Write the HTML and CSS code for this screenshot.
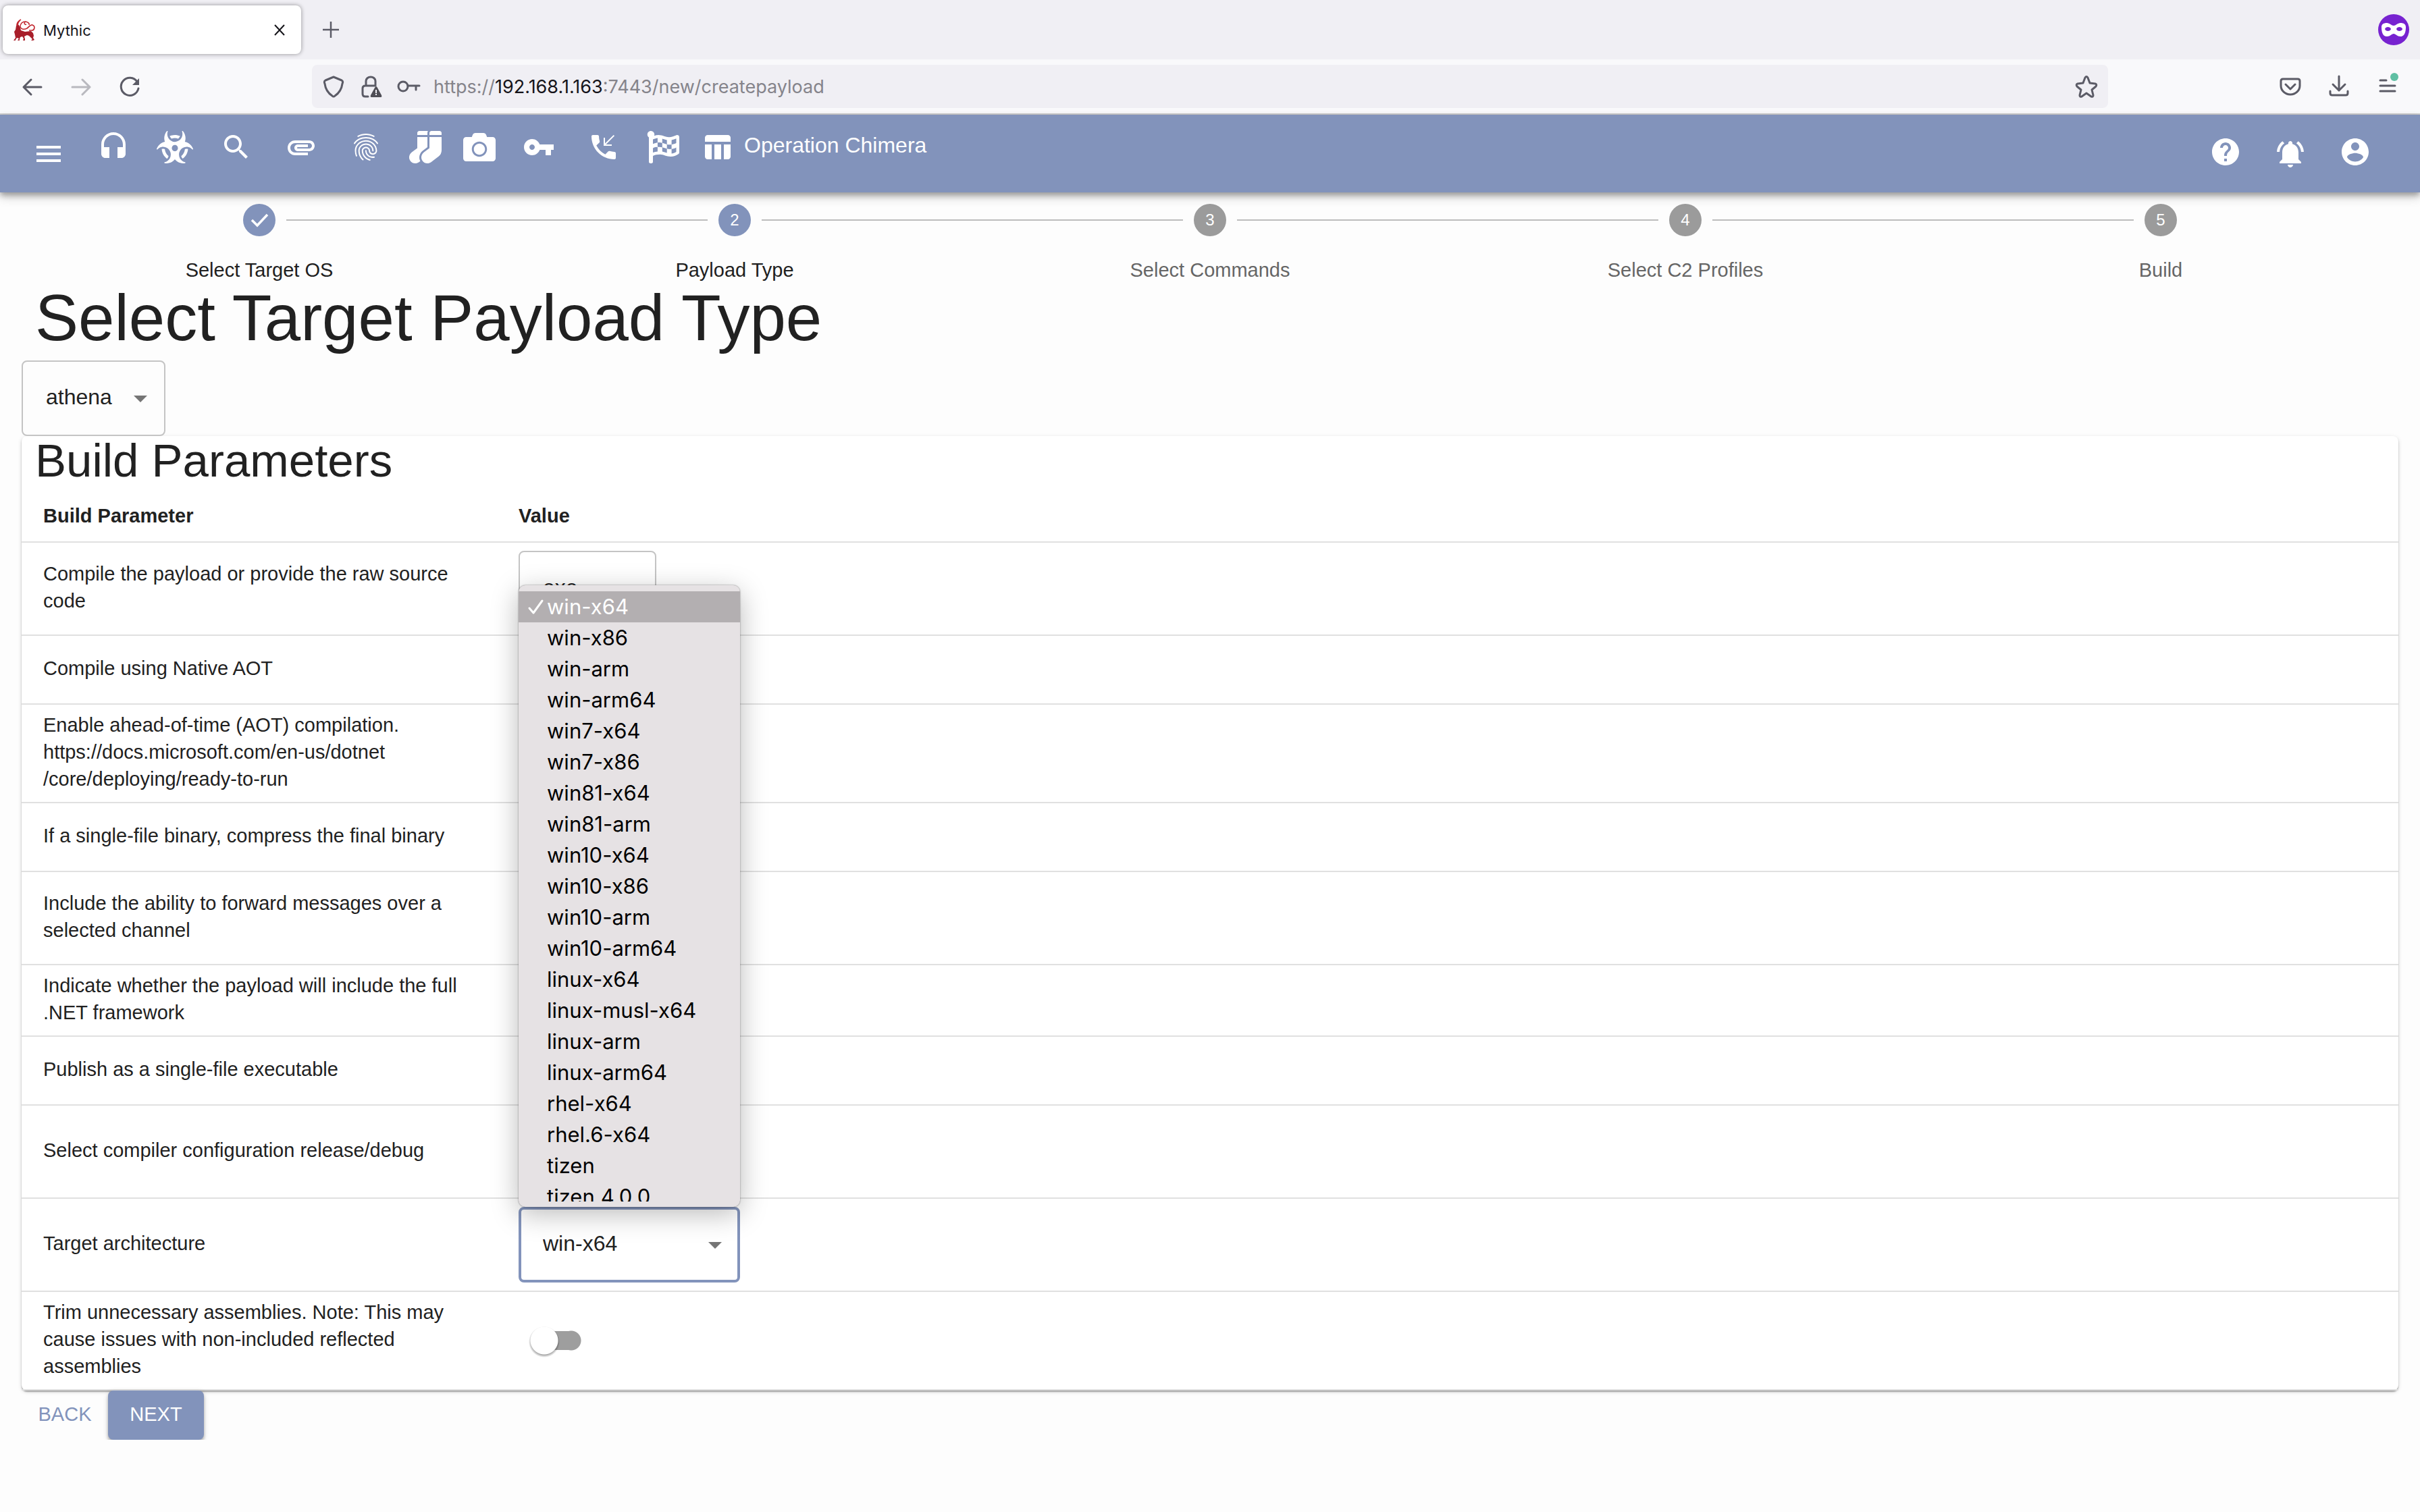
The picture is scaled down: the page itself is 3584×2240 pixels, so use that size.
FILE: index.html
```html
<!DOCTYPE html>
<html lang="en">
<head>
<meta charset="utf-8">
<title>Mythic</title>
<link rel="stylesheet" href="styles.css">
</head>
<body>
<div class="tabstrip">
  <div class="tab">
    <svg class="tab-logo" viewBox="0 0 32 32" aria-hidden="true"><g fill="none" stroke="#c2272f" stroke-width="1.600"><path d="M11 1C7 3 4 6 5 12M9 3C6 6 6 9 7 11" /><path d="M19 8c-2 1-4-1-2-3M10 12c0-5 3-8 8-8 4 1 6 3 5 5M10 12c2 4 6 4 10 2 4-3 5-6 8-5 5 2 3 8-1 8h-4"/></g><path fill="#a81e2a" d="M4 10l4-1 2 4 1 4 6 2 9-1 3 3 1 4-1 3 2 3-2 1h-3l2-2-5-5-3-1-4 2 1 4v2h-3l1-3-2-3-3 1-1 3v2H6l2-3-3-1-2 3v1H0l3-4-1-5-1-4 2-3z"/></svg>
    <span class="tab-title">Mythic</span>
    <button class="bare" aria-label="Close tab"><svg class="i20" viewBox="0 0 20 20"><path d="M3 3l14 15M17 3L3 18" fill="none" stroke="#15141a" stroke-width="2"/></svg></button>
  </div>
  <button class="bare newtab" aria-label="New tab"><svg class="i24" viewBox="0 0 24 24"><path d="M12 0v24M0 12h24" fill="none" stroke="#5b5b66" stroke-width="2.500"/></svg></button>
  <svg class="mask" viewBox="0 0 46 46" aria-label="Private browsing"><circle cx="23" cy="23" r="23" fill="#7722d0"/><path fill="#fff" fill-rule="evenodd" d="M5 19c0-4 3-6 8-6 4 0 7 4 10 4s6-4 10-4c5 0 8 2 8 6 0 8-2 14-8 14-5 0-7-4-10-4s-5 4-10 4C7 33 5 27 5 19zM10 22c1 4 8 4 9 0-1-4-8-4-9 0zM27 22c1 4 8 4 9 0-1-4-8-4-9 0z"/></svg>
</div>
<div class="toolbar">
  <div class="nav">
    <button class="bare" aria-label="Back"><svg class="i32" viewBox="0 0 32 32"><path d="M29 17H3M14 6L3 17l11 11" class="st"/></svg></button>
    <button class="bare dim" aria-label="Forward"><svg class="i32" viewBox="0 0 32 32"><path d="M3 17h26M18 6l11 11-11 11" class="st"/></svg></button>
    <button class="bare" aria-label="Reload"><svg class="i32" viewBox="0 0 32 32"><path d="M27 9A13 13 0 1 0 29 19" class="st"/><path fill="#5b5b66" d="M30 4v10H20z"/></svg></button>
  </div>
  <div class="urlbar">
    <svg class="i32" viewBox="0 0 32 32"><path d="M16 2l12 5c2 1 2 3 1 5-1 8-5 14-11 18q-2 2-4 0C8 26 4 20 3 12c-1-2-1-4 1-5z" class="st"/></svg>
    <svg class="i32" viewBox="0 0 32 32"><path d="M8 15V8a7 6 0 0 1 14 0v7M11 31H7q-4 0-4-4V19q0-4 4-4h15" class="st"/><path fill="#4f4e56" fill-rule="evenodd" d="M23 16q1 0 2 2l6 11q1 3-1 3H16q-2 0-1-3l6-11q1-2 2-2zM22 21v5h2v-5zm0 6v2h2v-2z"/></svg>
    <svg class="i32 key" viewBox="0 0 32 32"><circle cx="7" cy="16" r="7" class="st"/><path d="M14 15h17M26 15v6" class="st"/></svg>
    <div class="url">https://<b>192.168.1.163</b>:7443/new/createpayload</div>
    <svg class="i32" viewBox="0 0 32 32"><path d="M14 3q2-3 4 0l3 8 8 1q3 1 1 4l-6 5 2 8q0 3-3 2l-7-5-7 5q-3 1-3-2l2-8-6-5q-2-3 1-4l8-1z" class="st"/></svg>
  </div>
  <div class="tools">
    <svg class="i32" viewBox="0 0 32 32"><path d="M5 5h22q3 0 3 3v7a14 13 0 0 1-28 0V8q0-3 3-3zM9 13l7 7 7-7" class="st"/></svg>
    <svg class="i32" viewBox="0 0 32 32"><path d="M16 1v21M7 13l9 9 9-9M3 23v3q0 3 3 3h20q3 0 3-3v-3" class="st"/></svg>
    <svg class="i32" viewBox="0 0 32 32"><path d="M5 7h9M5 15h22M5 23h22" class="st"/><circle cx="26" cy="2" r="6" fill="#5fbfa3"/></svg>
  </div>
</div>
<header class="appbar">
  <button class="bare menu-btn" aria-label="Open menu"><svg class="i48" viewBox="0 0 24 24"><path d="M3 18h18v-2H3v2zm0-5h18v-2H3v2zm0-7v2h18V6H3z"/></svg></button>
  <nav class="links">
    <a href="#" aria-label="Callbacks"><svg class="i48" viewBox="0 0 24 24"><path d="M12 1c-4.970 0-9 4.030-9 9v7c0 1.660 1.340 3 3 3h3v-8H5v-2c0-3.870 3.130-7 7-7s7 3.130 7 7v2h-4v8h3c1.660 0 3-1.340 3-3v-7c0-4.970-4.030-9-9-9z"/></svg></a>
    <a href="#" class="tight" aria-label="Payloads"><svg class="i54" viewBox="0 0 576 512"><path d="M287.900 112c18.600 0 36.200 3.800 52.800 9.600 13.300-10.300 23.600-24.300 29.500-40.700-25.200-10.900-53-17-82.200-17-29.100 0-56.900 6-82.100 16.900 5.900 16.400 16.200 30.400 29.500 40.700 16.500-5.700 34-9.500 52.500-9.500zM163.600 438.700c12-11.800 20.400-26.400 24.500-42.400-32.900-26.400-54.800-65.300-58.900-109.600-8.500-2.800-17.200-4.600-26.400-4.600-7.600 0-15.200 1-22.500 3.100 4.100 62.800 35.800 118 83.300 153.500zm224.200-42.600c4.100 16 12.500 30.700 24.500 42.500 47.400-35.500 79.100-90.700 83-153.500-7.200-2-14.700-3-22.200-3-9.200 0-18 1.900-26.600 4.700-4.100 44.200-26 82.900-58.700 109.300zm113.500-205c-17.600-10.400-36.300-16.600-55.300-19.900 6-17.700 10-36.400 10-56.200 0-41-14.500-80.800-41-112.200-2.500-3-6.600-3.700-10-1.800-3.300 1.900-4.800 6-3.600 9.800 4.500 13.800 6.600 26.300 6.600 38.500 0 67.800-53.800 122.900-120 122.900S168 117 168 49.200c0-12.100 2.200-24.700 6.600-38.500 1.200-3.700-.3-7.800-3.600-9.800-3.400-1.900-7.500-1.200-10 1.800C134.600 34.200 120 74 120 115c0 19.800 3.900 38.500 10 56.200-18.900 3.300-37.700 9.500-55.300 19.900-34.600 20.500-61 53.300-74.300 92.400-1.300 3.700.2 7.700 3.500 9.800 3.300 2 7.500 1.300 10-1.600 9.400-10.800 19-19.100 29.200-25.100 57.300-33.900 130.800-13.700 163.900 45 33.100 58.700 13.400 134-43.900 167.900-10.200 6.100-22 10.400-35.800 13.400-3.700.8-6.400 4.200-6.400 8.100.1 4 2.700 7.300 6.500 8 39.700 7.800 80.600.8 115.200-19.700 18-10.600 32.900-24.500 45.300-40.100 12.400 15.600 27.300 29.500 45.300 40.100 34.600 20.500 75.500 27.500 115.200 19.700 3.800-.7 6.400-4 6.500-8 0-3.900-2.600-7.300-6.400-8.100-13.900-2.900-25.600-7.300-35.800-13.400-57.300-33.900-77-109.200-43.900-167.900s106.600-78.900 163.900-45c10.200 6.100 19.800 14.300 29.200 25.100 2.500 2.900 6.700 3.600 10 1.600s4.800-6.100 3.500-9.800c-13.100-39.100-39.500-72-74.100-92.400zm-213.400 129c-26.500 0-48-22-48-49.100s21.500-49.100 48-49.100 48 22 48 49.100-21.500 49.100-48 49.100z"/></svg></a>
    <a href="#" aria-label="Search"><svg class="i48" viewBox="0 0 24 24"><path d="M15.500 14h-.79l-.28-.27C15.410 12.590 16 11.110 16 9.500 16 5.910 13.090 3 9.500 3S3 5.910 3 9.500 5.910 16 9.500 16c1.610 0 3.090-.59 4.230-1.570l.27.28v.79l5 4.990L20.490 19l-4.990-5zm-6 0C7.010 14 5 11.990 5 9.500S7.010 5 9.500 5 14 7.010 14 9.500 11.990 14 9.500 14z"/></svg></a>
    <a href="#" aria-label="Files"><svg class="i48" viewBox="0 0 24 24"><path d="M2 12.500C2 9.460 4.460 7 7.500 7H18c2.210 0 4 1.790 4 4s-1.790 4-4 4H9.500C8.120 15 7 13.880 7 12.500S8.120 10 9.500 10H17v2H9.410c-.55 0-.55 1 0 1H18c1.100 0 2-.9 2-2s-.9-2-2-2H7.500C5.570 9 4 10.570 4 12.500S5.570 16 7.500 16H17v2H7.500C4.460 18 2 15.540 2 12.500z"/></svg></a>
    <a href="#" aria-label="Credentials"><svg class="i48" viewBox="0 0 24 24"><path d="M17.810 4.470c-.08 0-.16-.02-.23-.06C15.660 3.420 14 3 12.010 3c-1.980 0-3.860.47-5.570 1.410-.24.13-.54.04-.68-.2-.13-.24-.04-.55.2-.68C7.820 2.520 9.860 2 12.010 2c2.130 0 3.990.47 6.030 1.520.25.13.34.43.21.67-.09.18-.26.28-.44.28zM3.500 9.720c-.1 0-.2-.03-.29-.09-.23-.16-.28-.47-.12-.7.99-1.400 2.250-2.500 3.750-3.270C9.980 4.040 14 4.030 17.150 5.650c1.500.77 2.760 1.860 3.750 3.250.16.22.11.54-.12.7-.23.16-.54.11-.7-.12-.9-1.260-2.040-2.250-3.390-2.940-2.870-1.470-6.540-1.470-9.400.01-1.360.7-2.500 1.700-3.400 2.960-.08.14-.23.21-.39.21zm6.250 12.070c-.13 0-.26-.05-.35-.15-.87-.87-1.340-1.430-2.010-2.640-.69-1.230-1.050-2.730-1.050-4.340 0-2.970 2.540-5.390 5.660-5.390s5.660 2.420 5.660 5.390c0 .28-.22.5-.5.5s-.5-.22-.5-.5c0-2.420-2.090-4.390-4.660-4.390-2.570 0-4.660 1.970-4.660 4.390 0 1.440.32 2.770.93 3.850.64 1.150 1.080 1.640 1.850 2.420.19.2.19.51 0 .71-.11.1-.24.15-.37.15zm7.170-1.850c-1.190 0-2.240-.3-3.100-.89-1.490-1.010-2.380-2.650-2.380-4.390 0-.28.22-.5.5-.5s.5.22.5.5c0 1.410.72 2.740 1.940 3.560.71.48 1.540.71 2.540.71.24 0 .64-.03 1.040-.1.27-.05.53.13.58.41.05.27-.13.53-.41.58-.57.11-1.070.12-1.210.12zM14.910 22c-.04 0-.09-.01-.13-.02-1.590-.44-2.630-1.030-3.720-2.100-1.400-1.390-2.170-3.240-2.170-5.220 0-1.620 1.380-2.940 3.080-2.940 1.700 0 3.080 1.320 3.080 2.940 0 1.070.93 1.940 2.080 1.940s2.080-.87 2.080-1.940c0-3.770-3.250-6.830-7.250-6.830-2.840 0-5.440 1.580-6.610 4.030-.39.81-.59 1.760-.59 2.800 0 .78.07 2.010.67 3.610.1.26-.03.55-.29.64-.26.1-.55-.04-.64-.29-.49-1.310-.73-2.610-.73-3.960 0-1.200.23-2.290.68-3.240 1.330-2.790 4.280-4.600 7.510-4.600 4.550 0 8.250 3.510 8.250 7.830 0 1.620-1.380 2.940-3.080 2.940s-3.080-1.320-3.080-2.940c0-1.070-.93-1.940-2.080-1.940s-2.080.87-2.080 1.940c0 1.710.66 3.310 1.870 4.510.95.94 1.860 1.460 3.270 1.850.27.07.42.35.35.61-.05.23-.26.38-.47.38z"/></svg></a>
    <a href="#" class="tight" aria-label="Proxies"><svg class="i48" viewBox="0 0 512 512"><path d="M214.660 311.010L288 256V96H128v176l-86.650 64.610c-39.400 29.560-53.860 84.420-29.210 127.060C30.390 495.250 63.270 512 96.080 512c20.030 0 40.250-6.250 57.520-19.200l21.860-16.390c-29.850-55.380-13.540-125.840 39.200-165.400zM288 32c0-11.050 3.070-21.300 8.020-30.380C293.400.92 290.850 0 288 0H160c-17.670 0-32 14.330-32 32v32h160V32zM480 0H352c-17.670 0-32 14.330-32 32v32h192V32c0-17.670-14.330-32-32-32zM320 272l-86.130 64.610c-39.400 29.560-53.860 84.420-29.210 127.060 18.250 31.580 50.610 48.330 83.420 48.330 20.030 0 40.250-6.250 57.520-19.200l115.200-86.400A128 128 0 0 0 512 304V96H320v176z"/></svg></a>
    <a href="#" class="tight" aria-label="Screenshots"><svg class="i48" viewBox="0 0 512 512"><path d="M512 144v288c0 26.500-21.500 48-48 48H48c-26.500 0-48-21.500-48-48V144c0-26.500 21.500-48 48-48h88l12.300-32.900c7-18.700 24.900-31.100 44.900-31.100h125.500c20 0 37.900 12.400 44.900 31.100L376 96h88c26.500 0 48 21.500 48 48zM376 288c0-66.200-53.800-120-120-120s-120 53.800-120 120 53.800 120 120 120 120-53.800 120-120zm-32 0c0 48.500-39.500 88-88 88s-88-39.500-88-88 39.500-88 88-88 88 39.500 88 88z"/></svg></a>
    <a href="#" aria-label="Keys"><svg class="i48" viewBox="0 0 24 24"><path d="M12.650 10C11.830 7.670 9.610 6 7 6c-3.310 0-6 2.690-6 6s2.690 6 6 6c2.610 0 4.830-1.670 5.650-4H17v4h4v-4h2v-4H12.650zM7 14c-1.100 0-2-.9-2-2s.9-2 2-2 2 .9 2 2-.9 2-2 2z"/></svg></a>
    <a href="#" aria-label="Callback"><svg class="i48" viewBox="0 0 24 24"><path d="M20 15.500c-1.250 0-2.450-.2-3.570-.57-.35-.11-.74-.03-1.020.24l-2.200 2.200c-2.830-1.440-5.150-3.750-6.590-6.590l2.200-2.210c.28-.26.36-.65.25-1C8.700 6.450 8.500 5.250 8.500 4c0-.55-.45-1-1-1H4c-.55 0-1 .45-1 1 0 9.390 7.610 17 17 17 .55 0 1-.45 1-1v-3.500c0-.55-.45-1-1-1z"/><path d="M19.700 3.300l-6.700 6.700M12.500 5v5.500H18" fill="none" stroke="#fff"/></svg></a>
    <a href="#" class="tight" aria-label="Tasks"><svg class="i48" viewBox="0 0 512 512"><path d="M243.200 189.900V258c26.100 5.900 49.300 15.600 73.600 22.300v-68.200c-26-5.800-49.400-15.500-73.600-22.200zm223.300-123c-34.300 15.900-76.500 31.900-117 31.900C296 98.800 251.700 64 184.300 64c-25 0-47.300 4.400-68 12 2.800-7.300 4.100-15.200 3.600-23.600C118.100 24 94.800 1.200 66.300 0 34.300-1.300 8 24.300 8 56c0 19 9.500 35.800 24 45.900V488c0 13.300 10.700 24 24 24h16c13.300 0 24-10.700 24-24v-94.400c28.300-12.100 63.600-22.100 114.400-22.100 53.600 0 97.800 34.800 165.200 34.800 48.200 0 86.700-16.300 122.500-40.900 8.700-6 13.800-15.800 13.800-26.400V95.900c.1-23.300-24.200-38.800-45.400-29zM169.600 325.500c-25.800 2.900-50 7.200-73.600 16.100v-70.900c26-11.200 46.400-17.100 73.600-19.400v74.200zM464 191c-23.600 9.800-46.300 19.500-73.600 23.900V286c24.800-3.400 51.400-11.800 73.600-26v70.500c-25.100 16.100-48.500 24.700-73.600 27.100V286c-27 3.700-47.900 1.500-73.600-5.600v67.400c-23.900-7.400-47.300-16.700-73.600-21.300V258c-19.700-4.400-40.800-6.800-73.600-3.800v-70c-22.400 3.100-44.600 10.200-73.600 20.900v-70.500c33.200-12.200 50.100-19.800 73.600-22v71.600c27-3.700 48.400-1.300 73.600 5.700v-67.400c23.700 7.400 47.200 16.700 73.600 21.300v68.400c23.700 5.300 47.600 6.900 73.600 2.700V143c27-4.800 52.300-13.600 73.600-22.500z"/></svg></a>
    <a href="#" class="tight op"><svg class="i48" viewBox="0 0 24 24"><path d="M10 10.020h5V21h-5zM17 21h3c1.100 0 2-.9 2-2v-9h-5v11zm3-18H5c-1.100 0-2 .9-2 2v3h19V5c0-1.100-.9-2-2-2zM3 19c0 1.100.9 2 2 2h3V10H3v9z"/></svg><span>Operation Chimera</span></a>
  </nav>
  <div class="right">
    <button class="bare" aria-label="Help"><svg class="i48" viewBox="0 0 24 24"><path d="M12 2C6.480 2 2 6.480 2 12s4.480 10 10 10 10-4.480 10-10S17.520 2 12 2zm1 17h-2v-2h2v2zm2.070-7.750l-.9.920C13.450 12.900 13 13.500 13 15h-2v-.5c0-1.100.45-2.100 1.170-2.830l1.240-1.260c.37-.36.59-.86.59-1.410 0-1.100-.9-2-2-2s-2 .9-2 2H8c0-2.210 1.790-4 4-4s4 1.790 4 4c0 .88-.36 1.680-.93 2.250z"/></svg></button>
    <button class="bare bell" aria-label="Notifications"><svg class="i48" viewBox="0 0 24 24"><path d="M7.580 4.080L6.150 2.650C3.750 4.480 2.170 7.300 2.030 10.500h2c.15-2.650 1.510-4.970 3.550-6.420zm12.390 6.420h2c-.15-3.200-1.730-6.020-4.120-7.850l-1.420 1.430c2.020 1.450 3.390 3.770 3.540 6.420zM18 11c0-3.070-1.640-5.640-4.500-6.320V4c0-.83-.67-1.500-1.500-1.500s-1.500.67-1.500 1.500v.68C7.630 5.360 6 7.920 6 11v5l-2 2v1h16v-1l-2-2v-5zm-6 11c.14 0 .27-.01.4-.04.65-.14 1.180-.58 1.440-1.180.1-.24.15-.5.15-.78h-4c.01 1.100.9 2 2.010 2z"/></svg></button>
    <button class="bare" aria-label="Account"><svg class="i48" viewBox="0 0 24 24"><path d="M12 2C6.480 2 2 6.480 2 12s4.480 10 10 10 10-4.480 10-10S17.520 2 12 2zm0 3c1.660 0 3 1.340 3 3s-1.340 3-3 3-3-1.340-3-3 1.340-3 3-3zm0 14.200c-2.500 0-4.710-1.280-6-3.220.03-1.990 4-3.080 6-3.080 1.990 0 5.970 1.090 6 3.080-1.290 1.940-3.500 3.220-6 3.220z"/></svg></button>
  </div>
</header>
<main class="page">
  <ol class="stepper">
    <li class="step on"><div class="mark"><span class="dot"><svg class="i32" viewBox="0 0 32 32"><path d="M5 16l8 8L28 8" fill="none" stroke="#fff" stroke-width="3.500"/></svg></span></div><span class="step-label">Select Target OS</span></li>
    <li class="step on"><div class="mark"><span class="dot">2</span></div><span class="step-label">Payload Type</span></li>
    <li class="step"><div class="mark"><span class="dot">3</span></div><span class="step-label">Select Commands</span></li>
    <li class="step"><div class="mark"><span class="dot">4</span></div><span class="step-label">Select C2 Profiles</span></li>
    <li class="step"><div class="mark"><span class="dot">5</span></div><span class="step-label">Build</span></li>
  </ol>
  <h1 class="title">Select Target Payload Type</h1>
  <span class="select w-type"><select aria-label="Payload type"><option>athena</option></select></span>
  <section class="paper">
    <h2 class="subtitle">Build Parameters</h2>
    <table class="params">
      <thead><tr><th scope="col">Build Parameter</th><th scope="col">Value</th></tr></thead>
      <tbody>
        <tr><td><label for="p1">Compile the payload or provide the raw source<br>code</label></td><td class="val"><span class="select w-out"><select id="p1"><option>exe</option></select></span></td></tr>
        <tr><td><label for="p2">Compile using Native AOT</label></td><td class="val"><input type="checkbox" class="switch" id="p2"></td></tr>
        <tr><td><label for="p3">Enable ahead-of-time (AOT) compilation.<br>https://docs.microsoft.com/en-us/dotnet<br>/core/deploying/ready-to-run</label></td><td class="val"><input type="checkbox" class="switch" id="p3"></td></tr>
        <tr><td><label for="p4">If a single-file binary, compress the final binary</label></td><td class="val"><input type="checkbox" class="switch" id="p4"></td></tr>
        <tr><td><label for="p5">Include the ability to forward messages over a<br>selected channel</label></td><td class="val"><span class="select w-out"><select id="p5"><option>none</option></select></span></td></tr>
        <tr><td><label for="p6">Indicate whether the payload will include the full<br>.NET framework</label></td><td class="val"><input type="checkbox" class="switch" id="p6"></td></tr>
        <tr><td><label for="p7">Publish as a single-file executable</label></td><td class="val"><input type="checkbox" class="switch" id="p7"></td></tr>
        <tr><td><label for="p8">Select compiler configuration release/debug</label></td><td class="val"><span class="select w-out"><select id="p8"><option>release</option></select></span></td></tr>
        <tr><td><label for="p9">Target architecture</label></td><td class="val"><div class="combo"><span class="select active"><select id="p9"><option>win-x64</option></select></span>
          <div class="popup"><ul class="options" role="listbox" aria-label="Target architecture">
            <li class="opt sel" role="option" aria-selected="true"><svg class="tick" viewBox="0 0 22 22"><path d="M1 13l6 7L20 2" fill="none" stroke="#fff" stroke-width="3" stroke-linecap="round" stroke-linejoin="round"/></svg>win-x64</li>
            <li class="opt" role="option">win-x86</li><li class="opt" role="option">win-arm</li><li class="opt" role="option">win-arm64</li><li class="opt" role="option">win7-x64</li><li class="opt" role="option">win7-x86</li><li class="opt" role="option">win81-x64</li><li class="opt" role="option">win81-arm</li><li class="opt" role="option">win10-x64</li><li class="opt" role="option">win10-x86</li><li class="opt" role="option">win10-arm</li><li class="opt" role="option">win10-arm64</li><li class="opt" role="option">linux-x64</li><li class="opt" role="option">linux-musl-x64</li><li class="opt" role="option">linux-arm</li><li class="opt" role="option">linux-arm64</li><li class="opt" role="option">rhel-x64</li><li class="opt" role="option">rhel.6-x64</li><li class="opt" role="option">tizen</li><li class="opt" role="option">tizen.4.0.0</li>
          </ul></div></div></td></tr>
        <tr><td><label for="p10">Trim unnecessary assemblies. Note: This may cause issues with non-included reflected assemblies</label></td><td class="val"><input type="checkbox" class="switch" id="p10"></td></tr>
      </tbody>
    </table>
  </section>
  <div class="actions"><button class="btn">BACK</button><button class="btn primary">NEXT</button></div>
</main>
</body>
</html>
```
FILE: styles.css
```css
* { box-sizing: border-box; }
body { margin: 0; background: #fdfdfd; color: #212121; font-family: "Liberation Sans", Arial, sans-serif; font-size: 29px; line-height: 40px; }
svg { display: block; flex: none; overflow: visible; }
.bare { border: 0; background: none; padding: 0; display: block; }
.i20 { width: 20px; height: 20px; }
.i24 { width: 24px; height: 24px; }
.i32 { width: 32px; height: 32px; }
.i48 { width: 48px; height: 48px; }
.i54 { width: 54px; height: 48px; }
.st { fill: none; stroke: #5b5b66; stroke-width: 3; stroke-linecap: round; stroke-linejoin: round; }

/* browser chrome */
.tabstrip { height: 88px; background: #f0eff4; display: flex; align-items: center; padding: 0 16px 0 4px; }
.tab { width: 442px; height: 72px; background: #fff; border-radius: 8px; box-shadow: 0 0 6px rgba(0,0,0,.4); display: flex; align-items: center; padding: 0 22px 0 16px; gap: 12px; }
.tab-logo { width: 32px; height: 32px; }
.tab-title { flex: 1; color: #15141a; font-family: Inter, sans-serif; font-size: 22px; line-height: 24px; padding-top: 2px; }
.newtab { margin-left: 32px; }
.mask { width: 46px; height: 46px; margin-left: auto; }
.toolbar { height: 82px; background: #f9f9fb; border-bottom: 2px solid #ccc; display: flex; align-items: center; padding-right: 32px; }
.nav { flex: 0 0 462px; display: flex; gap: 40px; padding-left: 32px; }
.dim { opacity: .4; }
.urlbar { flex: 1; height: 64px; background: #f0eff4; border-radius: 8px; display: flex; align-items: center; gap: 24px; padding: 0 16px; }
.key { margin-right: -4px; }
.url { flex: 1; font-size: 27px; line-height: 32px; padding-top: 2px; color: #85848b; font-family: Inter, sans-serif; }
.url b { color: #15141a; font-weight: 400; }
.tools { flex: 0 0 430px; display: flex; justify-content: flex-end; gap: 40px; }

/* application bar */
.appbar { position: relative; z-index: 1; height: 115px; background: #8293bb; box-shadow: 0 4px 8px rgba(0,0,0,.3), 0 8px 14px rgba(0,0,0,.16); display: flex; align-items: flex-start; padding: 24px 72px 0 48px; }
.appbar svg { fill: #fff; }
.menu-btn { margin-top: 10px; }
.links { flex: 1; display: flex; padding-left: 24px; }
.links a { color: #fff; text-decoration: none; padding: 0 24px; }
.links .tight { padding: 0 16px; }
.op { display: flex; gap: 16px; font-size: 32px; line-height: 42px; }
.right { display: flex; align-items: flex-start; gap: 48px; margin-top: 7px; }
.bell { padding-top: 3px; }

/* stepper */
.page { padding: 17px 32px 0; }
.stepper { list-style: none; margin: 0; padding: 0; display: flex; }
.step { flex: 1; text-align: center; color: #666; }
.step.on { color: #212121; }
.mark { display: grid; grid-template-columns: 1fr 48px 1fr; align-items: center; column-gap: 16px; }
.mark::before, .mark::after { content: ""; height: 2px; background: #bdbdbd; }
.step:first-child .mark::before, .step:last-child .mark::after { background: none; }
.dot { grid-column: 2; width: 48px; height: 48px; border-radius: 50%; background: #9b9b9b; color: #fff; font-size: 24px; display: flex; align-items: center; justify-content: center; }
.on .dot { background: #8293bb; }
.step-label { display: block; padding-top: 30px; }

/* headings */
.title { margin: 0; padding: 0 20px 12px; font-size: 96px; line-height: 102px; font-weight: 400; }
.subtitle { margin: 0; padding: 0 20px 10px; font-size: 69px; line-height: 74px; font-weight: 400; }

/* selects */
.select { position: relative; display: block; width: 204px; height: 112px; }
.select select { appearance: none; width: 100%; height: 100%; border: 2px solid #c4c4c4; border-radius: 8px; background: transparent; color: inherit; font: 32px/38px "Liberation Sans", Arial, sans-serif; padding: 0 34px 4px; }
.select::after { content: ""; position: absolute; right: 27px; top: 52px; border: 10px solid transparent; border-top-color: #757575; border-bottom: 0; }
.w-type { width: 213px; }
.active { width: 328px; }
.active select { border: 4px solid #8293bb; padding-left: 32px; }

/* parameter table */
.paper { background: #fff; border-radius: 8px; box-shadow: 0 2px 2px rgba(0,0,0,.3), 0 2px 6px rgba(0,0,0,.14); }
.params { width: 100%; table-layout: fixed; border-collapse: separate; border-spacing: 0; }
.params th, .params td { border-bottom: 2px solid #e0e0e0; padding: 10px 32px 14px; text-align: left; }
.params th { line-height: 48px; }
.params th:first-child { width: 20%; }
.params .val { padding: 12px 32px; }
.switch { appearance: none; display: block; margin: 0; width: 116px; height: 76px; background: radial-gradient(circle at 38px 38px, #fff 20px, transparent 21px), radial-gradient(circle at 38px 40px, rgba(0,0,0,.35) 19px, transparent 23px), radial-gradient(circle at 78px 38px, #9e9e9e 14px, transparent 15px), linear-gradient(#9e9e9e, #9e9e9e) 38px 24px / 40px 28px; background-repeat: no-repeat; }

/* open list of architectures */
.combo { position: relative; width: 328px; }
.popup { position: absolute; left: 0; right: 0; bottom: 100%; padding: 9px 0 8px; background: #e6e2e4; border-radius: 10px; box-shadow: 0 0 2px rgba(0,0,0,.5), 0 10px 40px rgba(0,0,0,.28); }
.options { list-style: none; margin: 0; padding: 0; height: 904px; overflow: hidden; }
.opt { display: flex; align-items: center; height: 46px; padding-left: 42px; color: #000; font: 31px/46px Inter, sans-serif; }
.opt.sel { background: #b3afb1; color: #fff; padding-left: 15px; gap: 5px; }
.tick { width: 22px; height: 22px; }

/* actions */
.actions { display: flex; }
.btn { min-width: 128px; height: 73px; border: 0; border-radius: 8px; background: none; color: #8293bb; font: 29px/40px "Liberation Sans", Arial, sans-serif; padding: 0 16px 4px; }
.primary { min-width: 142px; background: #8293bb; color: #fff; box-shadow: 0 4px 4px rgba(0,0,0,.25), 0 2px 8px rgba(0,0,0,.14); }
```
